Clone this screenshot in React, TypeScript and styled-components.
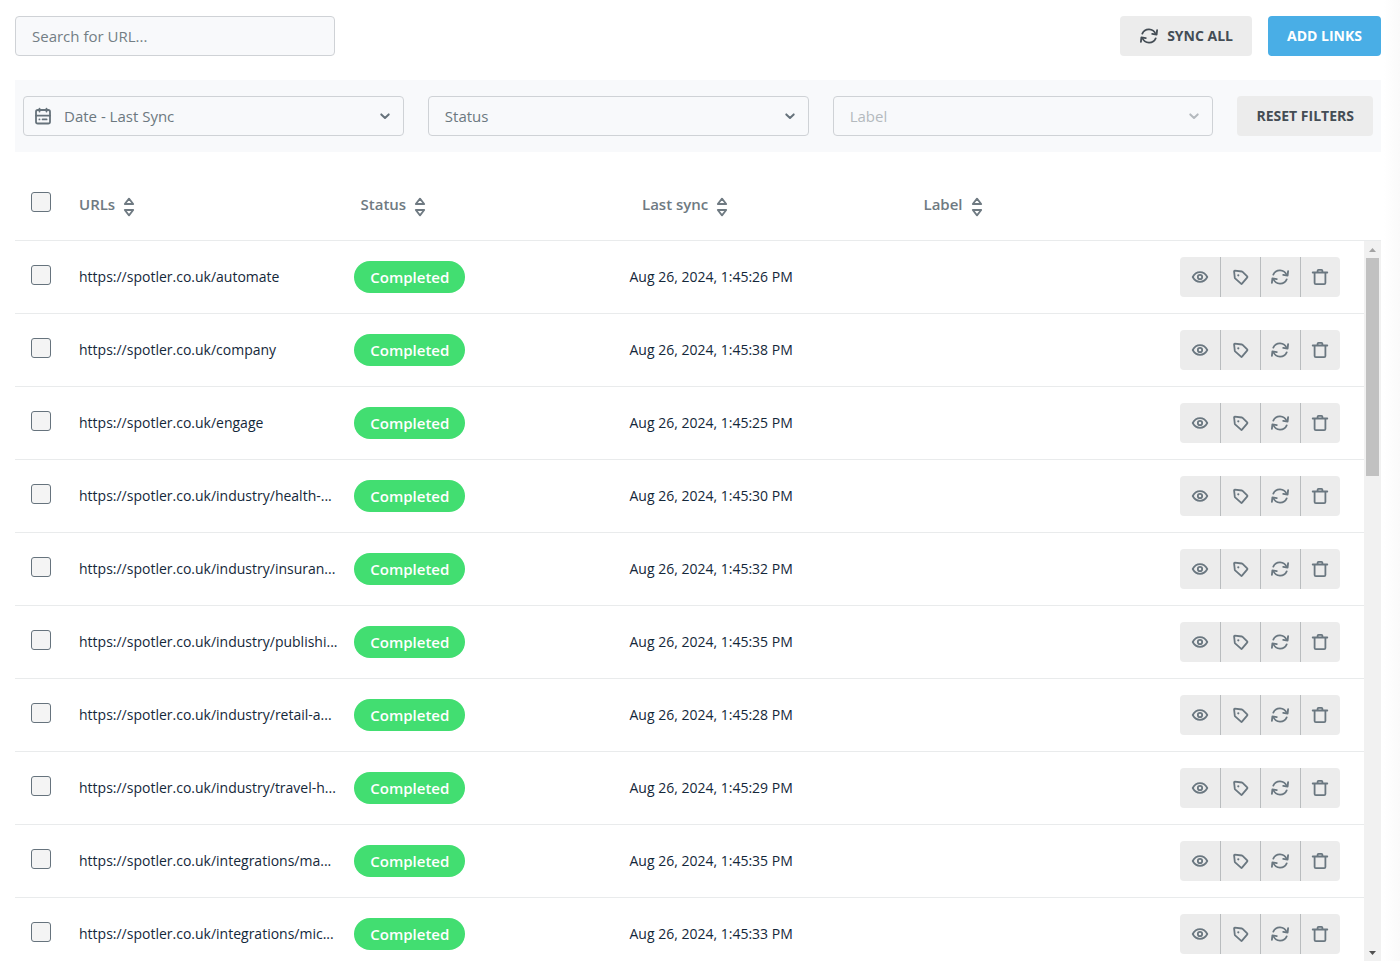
import React from "react";
import styled, { createGlobalStyle } from "styled-components";

const GlobalStyle = createGlobalStyle`
  *, *::before, *::after { box-sizing: border-box; }
  html, body, #root { height: 100%; }
  body {
    margin: 0;
    background: #fff;
    color: #14283a;
    font-family: "Open Sans", "Noto Sans", sans-serif;
    font-size: 14px;
    line-height: 20px;
  }
  button, input, select { font: inherit; }
`;

const Page = styled.main`
  height: 100%;
  min-height: 400px;
  display: flex;
  flex-direction: column;
  padding: 16px 19px 0 15px;
  overflow: hidden;
  background: linear-gradient(to left, #fafafa, #fff 16px);
`;

const Toolbar = styled.header`
  display: flex;
  align-items: center;
  gap: 16px;
  margin-bottom: 24px;
`;

const SearchInput = styled.input`
  width: 320px;
  height: 40px;
  margin: 0 auto 0 0;
  padding: 0 16px;
  border: 1px solid #cfd2d6;
  border-radius: 4px;
  background: #f8f9fb;
  color: #6c7880;
  font-size: 15px;
  &::placeholder { color: #737e85; opacity: 1; }
`;

const Button = styled.button<{ $primary?: boolean }>`
  display: inline-flex;
  align-items: center;
  justify-content: center;
  gap: 8px;
  height: 40px;
  padding: 0 19px;
  border: 0;
  border-radius: 4px;
  background: ${(p) => (p.$primary ? "#49aee6" : "#ececec")};
  color: ${(p) => (p.$primary ? "#fff" : "#444d55")};
  font-size: 14px;
  font-weight: 700;
  text-transform: uppercase;
  white-space: nowrap;
  cursor: pointer;
`;

const FilterBar = styled.section`
  display: grid;
  grid-template-columns: repeat(3, minmax(0, 1fr)) auto;
  gap: 24px;
  padding: 16px 8px;
  margin-bottom: 16px;
  background: #f8f9fb;
`;

const Field = styled.div<{ $disabled?: boolean }>`
  position: relative;
  color: ${(p) => (p.$disabled ? "#b4b9be" : "#66727b")};
`;

const FieldSelect = styled.select<{ $withIcon?: boolean }>`
  display: block;
  width: 100%;
  height: 40px;
  padding: 0 40px 0 ${(p) => (p.$withIcon ? "40px" : "16px")};
  border: 1px solid #cfd2d6;
  border-radius: 4px;
  background: transparent;
  color: #6c7880;
  font-size: 15px;
  appearance: none;
  &:disabled { color: #b4b9be; opacity: 1; }
`;

const FieldIcon = styled.span<{ $side: "left" | "right" }>`
  position: absolute;
  top: 10px;
  ${(p) => (p.$side === "left" ? "left: 10px;" : "right: 9px;")}
  display: flex;
  pointer-events: none;
`;

const TableArea = styled.section`
  flex: 1;
  min-height: 0;
  display: grid;
  grid-template: minmax(0, 1fr) / minmax(0, 1fr);
`;

const Table = styled.table`
  grid-area: 1 / 1;
  display: flex;
  flex-direction: column;
  min-height: 0;
`;

const TableHead = styled.thead`
  display: block;
`;

const TableBody = styled.tbody`
  display: block;
  flex: 1;
  min-height: 0;
  margin-right: 17px;
  overflow: hidden auto;
  scrollbar-width: none;
`;

const Row = styled.tr<{ $head?: boolean }>`
  display: grid;
  grid-template-columns: 64px repeat(4, minmax(0, 1fr)) ${(p) => (p.$head ? "176px" : "184px")};
  align-items: center;
  height: 73px;
  border-bottom: 1px solid #e9ebec;
`;

const HeadCell = styled.th`
  padding: 0;
  text-align: left;
`;

const SortButton = styled.button`
  display: inline-flex;
  align-items: center;
  gap: 8px;
  padding: 0;
  border: 0;
  background: none;
  color: #6f7a82;
  font-size: 15px;
  font-weight: 600;
  cursor: pointer;
  svg { margin-top: 6px; }
`;

const Cell = styled.td`
  padding: 0;
`;

const CheckCell = styled.td`
  display: flex;
  padding: 0 0 4px 16px;
`;

const Checkbox = styled.input`
  appearance: none;
  width: 20px;
  height: 20px;
  margin: 0;
  border: 1px solid #66737d;
  border-radius: 3px;
  background: #f4f4f4;
  &:checked { background: #49aee6; }
`;

const UrlCell = styled(Cell)`
  padding-right: 16px;
  overflow: hidden;
  white-space: nowrap;
`;

const StatusPill = styled.span`
  display: inline-flex;
  align-items: center;
  height: 32px;
  padding: 0 16px;
  border-radius: 16px;
  background: #42de71;
  color: #fff;
  font-size: 15px;
  font-weight: 600;
  vertical-align: top;
`;

const Actions = styled.div`
  display: flex;
  width: 160px;
  border-radius: 4px;
  background: #ececec;
  overflow: hidden;
`;

const ActionButton = styled.button`
  display: flex;
  align-items: center;
  justify-content: center;
  width: 40px;
  height: 40px;
  padding: 0;
  border: 0;
  background: none;
  color: #6a7780;
  cursor: pointer;
  & + & { box-shadow: inset 1px 0 #b9bcbe; }
`;

const ScrollTrack = styled.div`
  grid-area: 1 / 1;
  justify-self: end;
  display: flex;
  flex-direction: column;
  align-items: center;
  width: 17px;
  margin-top: 73px;
  background: #f1f1f1;
`;

const ScrollArrow = styled.span<{ $down?: boolean }>`
  display: flex;
  align-items: center;
  justify-content: center;
  height: 17px;
  color: ${(p) => (p.$down ? "#505050" : "#a3a3a3")};
`;

const ScrollRail = styled.div`
  flex: 1;
  width: 13px;
`;

const ScrollThumb = styled.div`
  height: 31.8%;
  background: #c1c1c1;
`;

const Icon = ({ children }: { children: React.ReactNode }) => (
  <svg
    width="20"
    height="20"
    viewBox="0 0 20 20"
    fill="none"
    stroke="currentColor"
    strokeWidth="1.8"
    strokeLinecap="round"
    strokeLinejoin="round"
    aria-hidden="true"
  >
    {children}
  </svg>
);

const EyeIcon = () => (
  <Icon>
    <path d="M2.700 10C4.400 6.900 7 5.200 10 5.200s5.600 1.700 7.300 4.800c-1.700 3.100-4.300 4.800-7.300 4.800S4.400 13.100 2.700 10z" />
    <circle cx="10" cy="10" r="2.200" />
  </Icon>
);

const TagIcon = () => (
  <Icon>
    <path d="M4.100 4.300c0-.4.300-.6.700-.6l7.100.8c.3 0 .5.100.7.300l4.600 4.600c.3.300.3.700.1 1l-5.300 6.300c-.3.300-.700.300-1 0l-5.900-5.300a1 1 0 0 1-.3-.6z" />
    <circle cx="8.300" cy="8.300" r="1.100" fill="currentColor" stroke="none" />
  </Icon>
);

const SyncIcon = () => (
  <Icon>
    <path d="M3.300 7.600A7.200 7.200 0 0 1 16.600 8" />
    <path d="M18.100 4.200l-.5 4.400-4.400-.7" />
    <path d="M16.700 12.400A7.200 7.200 0 0 1 3.400 12" />
    <path d="M1.900 15.800l.5-4.400 4.400.7" />
  </Icon>
);

const TrashIcon = () => (
  <Icon>
    <path d="M2.700 5.500h14.600M4.600 5.500v10.500c0 .7.500 1.200 1.200 1.200h8.400c.7 0 1.200-.5 1.200-1.200V5.500M7.600 5.500V3.700c0-.5.400-.9.900-.9h3c.5 0 .9.400.9.900v1.800" />
  </Icon>
);

const CalendarIcon = () => (
  <Icon>
    <rect x="3" y="4" width="14" height="13.500" rx="1.800" />
    <path d="M3 9.600h14M6.500 2.600v3M13.500 2.600v3M6.400 13.400h.1M9.600 13.400h4" />
  </Icon>
);

const ChevronIcon = () => (
  <Icon>
    <path d="M6.300 8.400l3.700 3.500 3.700-3.500" strokeWidth="2" />
  </Icon>
);

const SortIcon = () => (
  <svg
    width="12"
    height="20"
    viewBox="0 0 12 20"
    fill="none"
    stroke="currentColor"
    strokeWidth="1.8"
    strokeLinejoin="round"
    aria-hidden="true"
  >
    <path d="M6 1.600L10.200 7H1.800zM6 18.400L1.800 13h8.400z" />
  </svg>
);

const ArrowGlyph = ({ down }: { down?: boolean }) => (
  <svg width="7" height="4" viewBox="0 0 7 4" fill="currentColor" aria-hidden="true">
    <path d={down ? "M0 0h7L3.500 4z" : "M0 4h7L3.500 0z"} />
  </svg>
);

const columns = ["URLs", "Status", "Last sync", "Label"];

const links = [
  { url: "https://spotler.co.uk/automate", synced: "Aug 26, 2024, 1:45:26 PM" },
  { url: "https://spotler.co.uk/company", synced: "Aug 26, 2024, 1:45:38 PM" },
  { url: "https://spotler.co.uk/engage", synced: "Aug 26, 2024, 1:45:25 PM" },
  { url: "https://spotler.co.uk/industry/health-...", synced: "Aug 26, 2024, 1:45:30 PM" },
  { url: "https://spotler.co.uk/industry/insuran...", synced: "Aug 26, 2024, 1:45:32 PM" },
  { url: "https://spotler.co.uk/industry/publishi...", synced: "Aug 26, 2024, 1:45:35 PM" },
  { url: "https://spotler.co.uk/industry/retail-a...", synced: "Aug 26, 2024, 1:45:28 PM" },
  { url: "https://spotler.co.uk/industry/travel-h...", synced: "Aug 26, 2024, 1:45:29 PM" },
  { url: "https://spotler.co.uk/integrations/ma...", synced: "Aug 26, 2024, 1:45:35 PM" },
  { url: "https://spotler.co.uk/integrations/mic...", synced: "Aug 26, 2024, 1:45:33 PM" },
];

const actions = [
  { name: "View", Glyph: EyeIcon },
  { name: "Edit label", Glyph: TagIcon },
  { name: "Sync", Glyph: SyncIcon },
  { name: "Delete", Glyph: TrashIcon },
];

type FilterProps = { label: string; icon?: React.ReactNode; disabled?: boolean };

const Filter = ({ label, icon, disabled }: FilterProps) => (
  <Field $disabled={disabled}>
    {icon && <FieldIcon $side="left">{icon}</FieldIcon>}
    <FieldSelect aria-label={label} $withIcon={!!icon} disabled={disabled}>
      <option>{label}</option>
    </FieldSelect>
    <FieldIcon $side="right">
      <ChevronIcon />
    </FieldIcon>
  </Field>
);

export default function App() {
  return (
    <>
      <GlobalStyle />
      <Page>
        <Toolbar>
          <SearchInput type="text" placeholder="Search for URL..." aria-label="Search for URL" />
          <Button type="button">
            <SyncIcon />
            Sync all
          </Button>
          <Button type="button" $primary>
            Add links
          </Button>
        </Toolbar>

        <FilterBar>
          <Filter label="Date - Last Sync" icon={<CalendarIcon />} />
          <Filter label="Status" />
          <Filter label="Label" disabled />
          <Button type="button">Reset filters</Button>
        </FilterBar>

        <TableArea>
          <Table>
            <TableHead>
              <Row $head>
                <CheckCell>
                  <Checkbox type="checkbox" aria-label="Select all" />
                </CheckCell>
                {columns.map((name) => (
                  <HeadCell key={name} scope="col">
                    <SortButton type="button">
                      {name}
                      <SortIcon />
                    </SortButton>
                  </HeadCell>
                ))}
                <Cell />
              </Row>
            </TableHead>
            <TableBody>
              {links.map((link) => (
                <Row key={link.url}>
                  <CheckCell>
                    <Checkbox type="checkbox" aria-label={link.url} />
                  </CheckCell>
                  <UrlCell>{link.url}</UrlCell>
                  <Cell>
                    <StatusPill>Completed</StatusPill>
                  </Cell>
                  <Cell>{link.synced}</Cell>
                  <Cell />
                  <Cell>
                    <Actions>
                      {actions.map(({ name, Glyph }) => (
                        <ActionButton key={name} type="button" aria-label={name}>
                          <Glyph />
                        </ActionButton>
                      ))}
                    </Actions>
                  </Cell>
                </Row>
              ))}
            </TableBody>
          </Table>
          <ScrollTrack aria-hidden="true">
            <ScrollArrow>
              <ArrowGlyph />
            </ScrollArrow>
            <ScrollRail>
              <ScrollThumb />
            </ScrollRail>
            <ScrollArrow $down>
              <ArrowGlyph down />
            </ScrollArrow>
          </ScrollTrack>
        </TableArea>
      </Page>
    </>
  );
}
